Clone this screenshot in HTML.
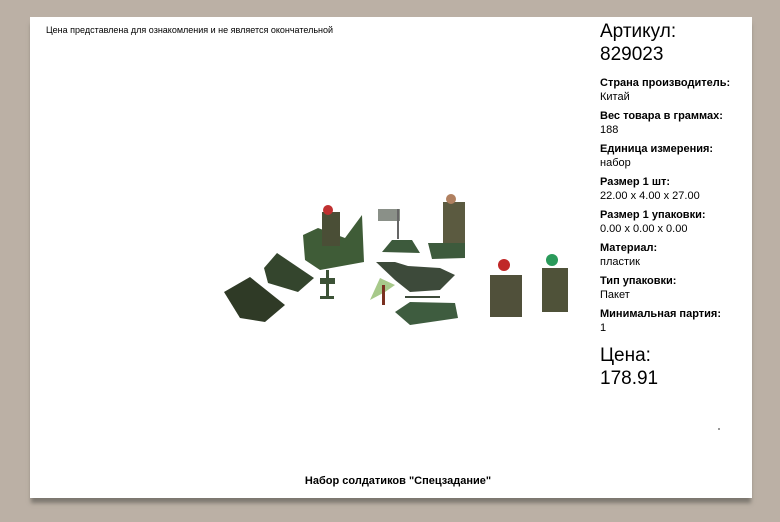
<!DOCTYPE html>
<html><head><meta charset="utf-8"><style>
html,body{margin:0;padding:0;}
body{width:780px;height:522px;background:#bbb0a5;position:relative;overflow:hidden;font-family:"Liberation Sans",Arial,sans-serif;}
.card{position:absolute;left:30px;top:17px;width:722px;height:481px;background:#fff;box-shadow:0 6px 4px -1px #7d7870;}
.note{position:absolute;left:46px;top:25px;font-size:9px;color:#000;}
.info{position:absolute;left:600px;top:20px;color:#000;}
.big{font-size:19px;line-height:23px;}
.lb{font-size:11px;font-weight:bold;margin-top:6px;line-height:13px;}
.vl{font-size:11px;line-height:14px;}
.title{position:absolute;left:0;width:796px;text-align:center;top:475px;font-size:11px;font-weight:bold;}
</style></head><body>
<div class="card"></div>
<div class="note">Цена представлена для ознакомления и не является окончательной</div>
<div class="info">
<div class="big">Артикул:<br>829023</div>
<div class="lb" style="margin-top:11px">Страна производитель:</div><div class="vl">Китай</div>
<div class="lb">Вес товара в граммах:</div><div class="vl">188</div>
<div class="lb">Единица измерения:</div><div class="vl">набор</div>
<div class="lb">Размер 1 шт:</div><div class="vl">22.00 x 4.00 x 27.00</div>
<div class="lb">Размер 1 упаковки:</div><div class="vl">0.00 x 0.00 x 0.00</div>
<div class="lb">Материал:</div><div class="vl">пластик</div>
<div class="lb">Тип упаковки:</div><div class="vl">Пакет</div>
<div class="lb">Минимальная партия:</div><div class="vl">1</div>
<div class="big" style="margin-top:9px">Цена:<br>178.91</div>
</div>
<svg style="position:absolute;left:0;top:0" width="780" height="522">
<polygon points="224,292 250,277 285,305 265,322 240,318" fill="#2f3a26"/>
<polygon points="264,268 277,253 314,278 298,292 268,283" fill="#34452d"/>
<polygon points="303,235 318,228 345,238 362,215 364,262 320,270 305,260" fill="#3f5c37"/>
<rect x="322" y="212" width="18" height="34" fill="#4a4e36"/><circle cx="328" cy="210" r="5" fill="#c03030"/>
<rect x="326" y="270" width="3" height="28" fill="#3c5236"/><rect x="320" y="278" width="15" height="6" fill="#3c5236"/><rect x="320" y="296" width="14" height="3" fill="#3c5236"/>
<rect x="378" y="209" width="22" height="12" fill="#8a9088"/><rect x="397" y="209" width="2" height="30" fill="#666"/>
<polygon points="382,252 392,240 412,240 420,253" fill="#3d5a3c"/>
<rect x="443" y="202" width="22" height="42" fill="#5b5a40"/><circle cx="451" cy="199" r="5" fill="#b08060"/>
<polygon points="428,243 465,243 465,258 432,259" fill="#3d5a3c"/>
<polygon points="376,262 395,262 408,266 440,268 455,275 440,290 410,292 395,280" fill="#3d4a3a"/>
<rect x="405" y="296" width="35" height="2" fill="#3d4a3a"/>
<polygon points="380,278 395,285 385,292 370,300" fill="#a7c98a"/><rect x="382" y="285" width="3" height="20" fill="#7a3020"/>
<polygon points="395,312 410,302 455,303 458,318 410,325" fill="#3e5c3f"/>
<rect x="490" y="275" width="32" height="42" fill="#50503a"/><circle cx="504" cy="265" r="6" fill="#c02828"/>
<rect x="542" y="268" width="26" height="44" fill="#4f5239"/><circle cx="552" cy="260" r="6" fill="#2a9a5a"/>
<rect x="718" y="428" width="2" height="2" fill="#999"/>
</svg>
<div class="title">Набор солдатиков "Спецзадание"</div>
</body></html>
